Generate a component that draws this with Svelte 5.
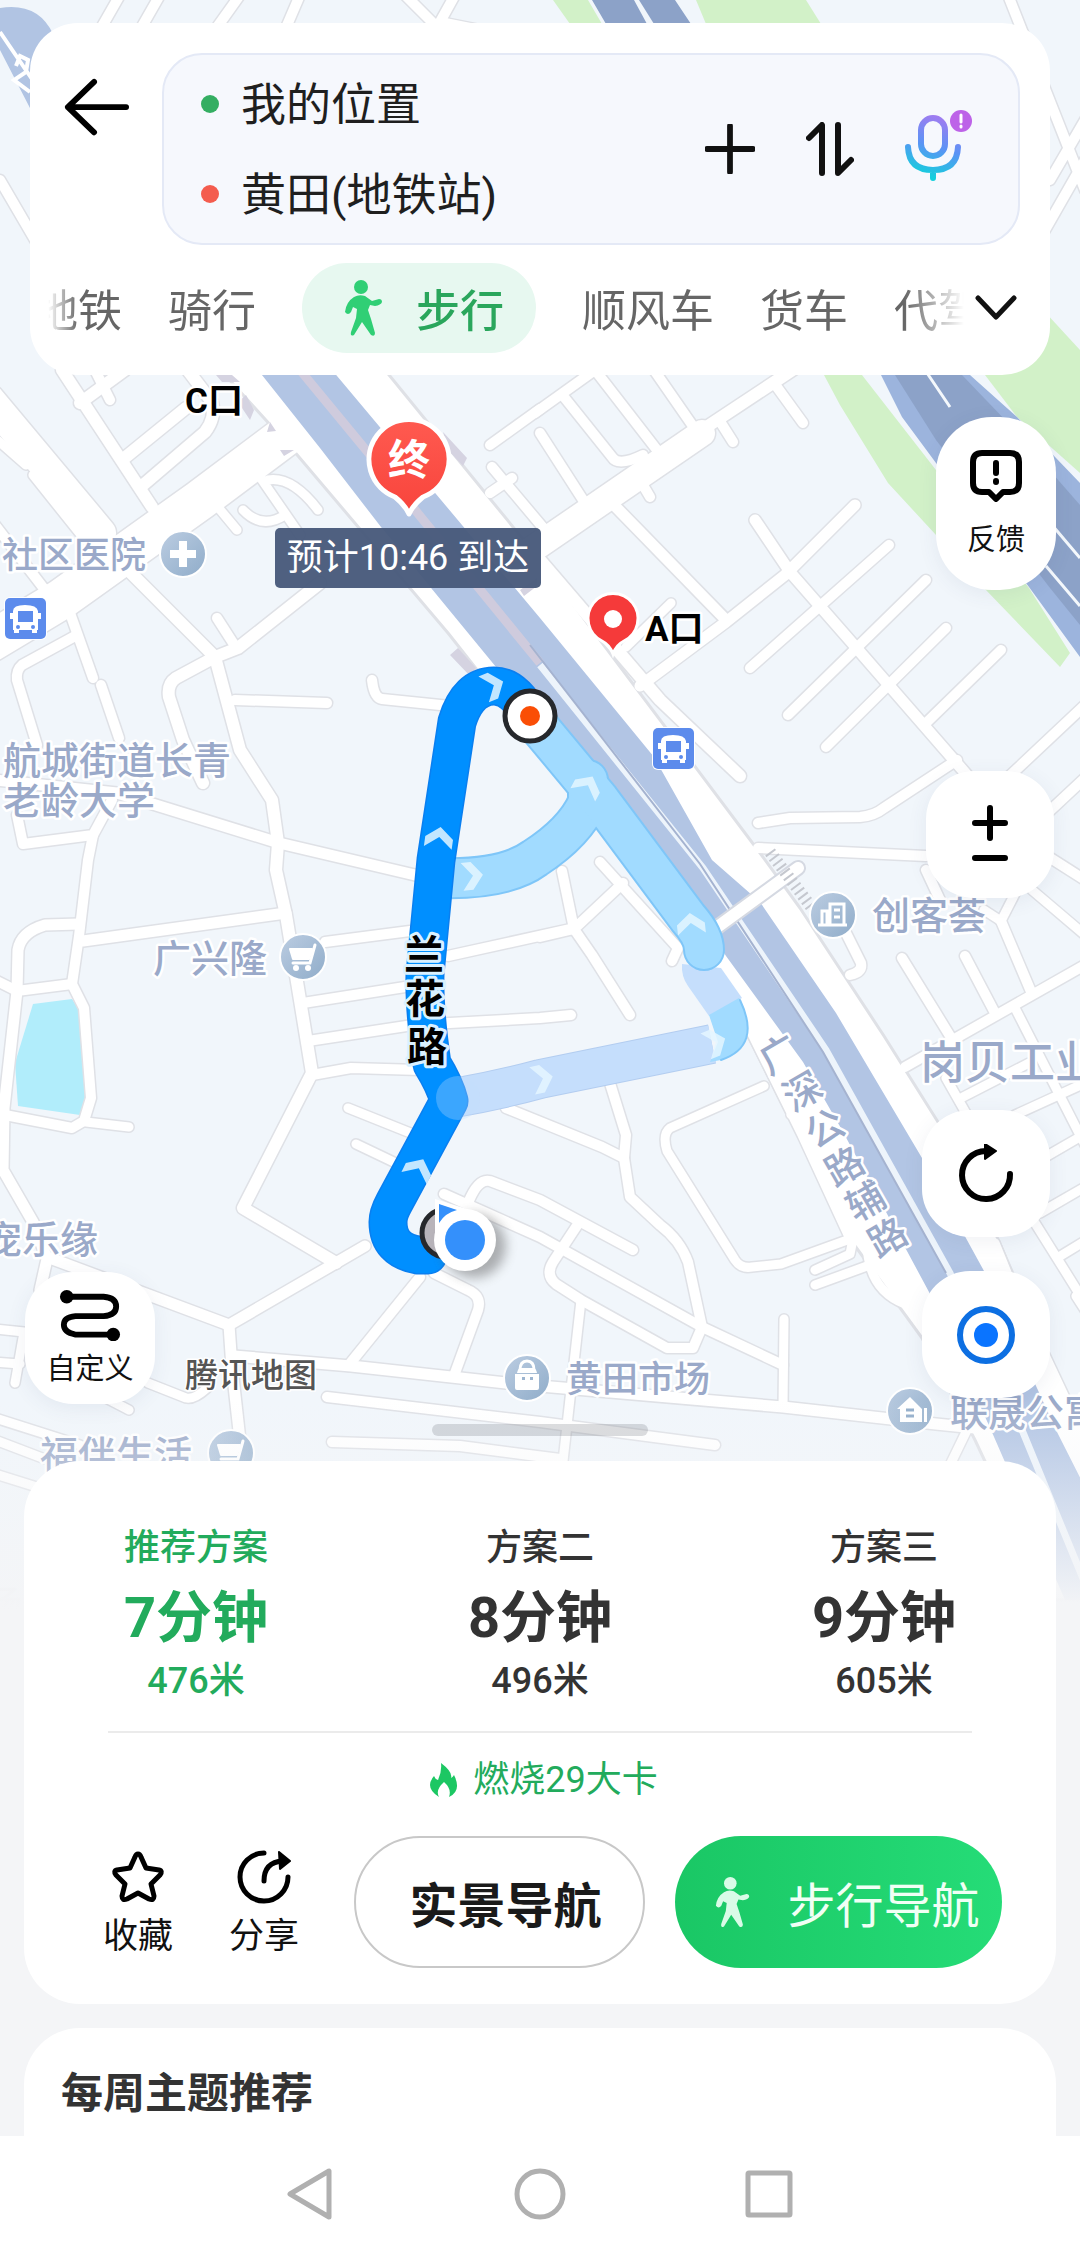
<script lang="ts">
  // street centre lines, [width, path]
  const streets: [number, string][] = [
    [30, 'M-10 400 L0 412 101 533'],
    [40, 'M300 425 L200 500 60 600 -10 642'],
    [12, 'M62 370 L152 507'],
    [12, 'M80 403 L125 370'],
    [12, 'M122 460 L186 408'],
    [12, 'M143 485 L205 432 Q216 418 212 402 L180 360'],
    [9, 'M-5 438 L26 465 M33 475 L85 540'],
    [10, 'M-5 525 L45 590'],
    [12, 'M131 573 L215 657 240 750 272 800 278 843 276 870 286 915 312 1073 243 1208 336 1263'],
    [12, 'M320 583 L238 648 215 657 176 678 Q167 684 169 697 L183 740 203 783'],
    [10, 'M217 618 L235 646'],
    [10, 'M235 700 L327 703'],
    [10, 'M372 680 Q374 698 382 699 L450 706'],
    [10, 'M70 613 L93 678 M101 685 L119 738'],
    [10, 'M77 635 L22 665 Q16 670 17 680 L37 745'],
    [11, 'M-5 780 L117 793 279 843 415 875'],
    [10, 'M17 815 L23 844 93 835 112 800'],
    [10, 'M93 835 L88 860 79 936 72 984 84 1008 91 1098 84 1121 72 1128 5 1115'],
    [11, 'M79 924 L45 925 Q21 932 18 950 L17 991 4 1108 3 1170 33 1222 47 1259 40 1290'],
    [10, 'M-5 980 L17 991 72 984'],
    [9, 'M86 1122 L129 1127'],
    [11, 'M83 941 L286 913'],
    [10, 'M325 942 L410 931 M448 956 L575 928'],
    [10, 'M303 1003 L405 987'],
    [10, 'M308 1041 L413 1025 540 1018 571 1015'],
    [10, 'M312 1075 L351 1068 420 1070'],
    [9, 'M348 1108 L413 1134 M356 1144 L400 1165'],
    [11, 'M47 1257 L229 1325 365 1246'],
    [11, 'M229 1325 L232 1368 240 1440'],
    [11, 'M234 1356 L351 1366 506 1383 783 1407 936 1424 975 1428'],
    [10, 'M348 1366 L420 1277'],
    [10, 'M455 1373 L478 1310 Q482 1296 468 1290 L434 1273'],
    [10, 'M327 1397 L540 1422 715 1445'],
    [10, 'M332 1442 L460 1446 560 1459'],
    [9, 'M148 1383 L186 1398 Q194 1400 207 1388'],
    [9, 'M-5 1418 L80 1445 M-5 1440 L45 1459 M-5 1474 L40 1488'],
    [9, 'M-5 1329 L24 1332 15 1383 M-5 1362 L20 1364 M100 1395 L129 1410'],
    [10, 'M444 1194 L540 1237 702 1327 783 1365'],
    [10, 'M468 1203 Q478 1178 490 1181 L540 1200 633 1250'],
    [10, 'M578 1224 L553 1262 Q545 1275 556 1284 L581 1300 667 1348 693 1348 702 1327 688 1262 Q680 1240 660 1225 L630 1197 624 1158 626 1135 609 1080'],
    [10, 'M506 1108 L602 1147 624 1158'],
    [9, 'M581 1300 L562 1470'],
    [9, 'M784 1319 L783 1407'],
    [9, 'M764 1086 L670 1128 Q662 1134 667 1151 L735 1260 Q741 1269 752 1267 L781 1264 850 1239 867 1239'],
    [9, 'M750 1030 L802 1135 850 1239'],
    [7, 'M790 1115 L806 1106 M812 1150 L826 1142 M832 1182 L846 1174'],
    [9, 'M815 1270 L850 1254 853 1239 M815 1285 L867 1266'],
    [9, 'M867 1243 Q868 1290 905 1304'],
    [10, 'M623 883 L574 929 540 937 M562 871 L574 929 592 955 630 1015'],
    [10, 'M600 862 L678 948 672 961'],
    [10, 'M846 933 L861 963 Q863 972 850 975'],
    [10, 'M902 958 L950 1036 M965 956 L995 1013 M1085 965 L905 1067 M1001 921 L1032 994'],
    [9, 'M1022 880 L1001 921 984 910 M1032 890 L1085 935'],
    [9, 'M1015 1008 L1085 1145 M963 1097 L1029 1063 M946 1078 L967 1115 M1015 1115 L1085 1083'],
    [9, 'M1040 1160 L1085 1134 M1040 1213 L1085 1187 M1030 1215 L1085 1303 M1057 1258 L1085 1241'],
    [9, 'M995 1243 L1010 1280 M1045 1355 L1085 1440 M1076 1296 L1085 1310 M967 1430 L950 1465'],
    [26, 'M530 551 L702 433'],
    [12, 'M702 430 L800 365'],
    [10, 'M535 413 L595 370 M540 433 L585 503 M564 397 L612 457 Q618 467 643 455'],
    [10, 'M595 370 L657 450 M654 370 L697 432 M774 383 L803 423 M721 423 L733 442 M640 480 L650 497'],
    [11, 'M612 503 L726 620'],
    [11, 'M855 505 L785 575 726 622 640 686'],
    [11, 'M755 520 L790 572 860 652 967 775'],
    [10, 'M889 545 L750 668 M926 580 L788 715 M946 628 L826 747 M1001 650 L926 723'],
    [10, 'M957 760 L884 808 Q874 816 860 817 L790 818 758 823'],
    [10, 'M758 848 L926 856 M926 870 L940 900'],
    [10, 'M1085 705 L1000 785 M1085 778 L1040 820 M1030 845 L1085 880'],
    [9, 'M671 603 L626 647'],
    [12, 'M540 560 L660 700 740 776'],
    [10, 'M490 445 L540 409 M492 467 L545 530 M490 493 L512 478'],
    [9, 'M253 467 L300 535 M268 480 Q292 476 318 510 M243 510 Q262 530 285 515 M212 500 L237 530'],
    [10, 'M120 -5 L100 30 M160 -5 L140 30 M300 -5 L285 30 M405 -5 L440 30 M455 -5 L440 22 480 30 M240 -5 L215 30'],
    [10, 'M1008 -5 L1085 190 M1085 120 L1050 180 M1045 230 L1085 160 M0 180 L35 240 M95 370 L110 400'],
  ];

  const chevrons = [
    { x: 492, y: 686, r: 68 },
    { x: 439, y: 839, r: 8 },
    { x: 471, y: 876, r: 84 },
    { x: 418, y: 1170, r: 26 },
    { x: 587, y: 787, r: 28 },
    { x: 691, y: 925, r: -6 },
    { x: 714, y: 1043, r: 68 },
    { x: 541, y: 1079, r: 78 },
  ];

  const places = [
    { name: '社区医院', x: 2, y: 556, size: 36 },
    { name: '航城街道长青', x: 3, y: 761, size: 38 },
    { name: '老龄大学', x: 3, y: 801, size: 38 },
    { name: '广兴隆', x: 153, y: 959, size: 38 },
    { name: '宠乐缘', x: -16, y: 1240, size: 38 },
    { name: '福伴生活', x: 40, y: 1455, size: 38 },
    { name: '黄田市场', x: 566, y: 1380, size: 36 },
    { name: '创客荟', x: 872, y: 916, size: 38 },
    { name: '联晟公寓', x: 950, y: 1413, size: 38 },
  ];

  const discs = [
    [183, 554], [303, 957], [231, 1453], [527, 1378], [833, 915], [910, 1411],
  ];

  const roadName = [
    ['广', 779, 1055], ['深', 803, 1092], ['公', 825, 1129],
    ['路', 845, 1167], ['辅', 866, 1202], ['路', 888, 1238],
  ];

  const plans = [
    { title: '推荐方案', time: '7分钟', distance: '476米' },
    { title: '方案二', time: '8分钟', distance: '496米' },
    { title: '方案三', time: '9分钟', distance: '605米' },
  ];

  let active = $state(0);
  let origin = $state('我的位置');
  let destination = $state('黄田(地铁站)');
</script>

{#snippet walker(cls: string)}
  <svg class={cls} viewBox="0 0 40 58" aria-hidden="true">
    <circle cx="17" cy="8" r="7" />
    <path d="M10 18 Q15 15 21 17 L28 22 L35 20 Q38 20 38 23 Q37 26 31 27 L26 26 L24 31 L27 40 L31 54 Q31 58 27 56 L18 43 L10 56 Q6 58 7 53 L12 39 L13 30 L9 28 L7 33 Q4 37 1 33 Q2 23 10 18 Z" />
  </svg>
{/snippet}

{#snippet bus(x: number, y: number)}
  <g transform="translate({x} {y})">
    <rect x="-1" y="-1" width="43" height="43" rx="6" fill="#fff" />
    <rect width="41" height="41" rx="5" fill="#5c8bec" />
    <path d="M8 13 Q8 7 20 7 T33 13 V32 H8 Z" fill="#fff" />
    <path d="M13 13 H28 V24 H13 Z" fill="#5c8bec" />
    <path d="M5 15 h3 v6 h-3 z M33 15 h3 v6 h-3 z M9 30 h5 v5 h-5 z M27 30 h5 v5 h-5 z" fill="#fff" />
    <circle cx="13" cy="29" r="2" fill="#5c8bec" />
    <circle cx="28" cy="29" r="2" fill="#5c8bec" />
  </g>
{/snippet}

{#snippet cart(x: number, y: number)}
  <g transform="translate({x} {y})" fill="none" stroke="#fff">
    <path d="M-13 -8 H9 L6 2 H-10 Z" fill="#fff" stroke-width="2" stroke-linejoin="round" />
    <path d="M12 -12 L7 6 H-10" stroke-width="3" stroke-linecap="round" />
    <circle cx="-7" cy="11" r="3" fill="#fff" stroke="none" />
    <circle cx="5" cy="11" r="3" fill="#fff" stroke="none" />
  </g>
{/snippet}

<main>
  <svg class="map" viewBox="0 0 1080 1640" role="img" aria-label="步行路线地图">
    <defs>
      <linearGradient id="fade" x1="0" y1="0" x2="0" y2="1">
        <stop offset="0" stop-color="#f4f5f7" stop-opacity="0" />
        <stop offset="1" stop-color="#f4f5f7" />
      </linearGradient>
      <linearGradient id="disc" x1="0" y1="0" x2="1" y2="1">
        <stop offset="0" stop-color="#bccde2" />
        <stop offset="1" stop-color="#8facc9" />
      </linearGradient>
      <linearGradient id="pin" x1="0" y1="0" x2="0" y2="1">
        <stop offset="0" stop-color="#ff5a50" />
        <stop offset="1" stop-color="#f8443c" />
      </linearGradient>
      <filter id="soft" x="-50%" y="-50%" width="200%" height="200%">
        <feGaussianBlur stdDeviation="6" />
      </filter>
    </defs>
    <rect width="1080" height="1640" fill="#f1f6fb" />

    <!-- parks and water -->
    <g fill="#d2f1c8">
      <path d="M824 375 L862 375 936 470 1029 588 1070 653 1060 667 984 588 936 535 888 483 840 405 Z" />
      <path d="M985 375 L1045 312 1080 350 1080 473 1017 417 Z" />
      <path d="M553 0 H588 L602 24 H570 Z M696 0 H806 L821 24 H706 Z" />
    </g>
    <path d="M33 1004 L72 999 80 1011 88 1091 80 1115 18 1106 15 1063 Z" fill="#b1edfb" />

    <!-- expressway in the north-east -->
    <path d="M881 375 H970 L1017 417 1056 458 1080 483 V657 L1029 587 936 463 902 417 Z" fill="#9cb4dd" />
    <path d="M895 375 H962 L1010 425 1080 505 V625 L1050 588 936 440 Z" fill="#8ca2c8" />
    <path d="M925 370 L950 407 M1052 525 L1080 558 M1046 566 L1080 606" stroke="#f4f8fc" stroke-width="3" fill="none" />
    <path d="M592 0 H634 L647 24 H606 Z M639 0 H675 L691 24 H654 Z" fill="#8ca2c8" />
    <path d="M0 8 Q38 2 53 34 L31 80 V110 L0 50 Z" fill="#b1c4e3" />
    <path d="M0 32 L34 82 M16 66 L20 56 28 60 26 72 14 80 30 92" stroke="#fff" stroke-width="4" fill="none" />

    <g class="lines">
      {#each streets as [w, d]}
        <path {d} stroke="#dfe1e6" stroke-width={w + 3} />
      {/each}
      <path d="M205 360 L225 375 293 450 448 633 560 775 700 965 750 1040 850 1239 922 1338 975 1440 1050 1600 H1160 L1080 1430 1005 1255 965 1165 884 1036 800 908 760 853 600 640 540 560 385 370 Z" fill="#fff" stroke="#dfe1e6" stroke-width="3" />
      {#each streets as [w, d]}
        <path {d} stroke="#fff" stroke-width={w} />
      {/each}
    </g>

    <!-- small islands and overpass stubs -->
    <path d="M246 395 L254 410 250 420 238 402 Z M216 375 H232 L240 382 H222 Z M267 432 L270 422 276 431 Z M280 450 H294 L284 456 Z M443 432 L467 458 463 466 448 450 Z M450 655 L458 648 476 668 470 676 Z M520 590 L537 578 V586 L524 596 Z" fill="#d5d3e1" />

    <!-- railway corridor -->
    <path d="M258 370 L320 448 381 527 496 667 667 860 726 956 803 1062 842 1130 929 1292 991 1430 1065 1600 H1142 L1056 1430 984 1271 922 1158 836 1013 760 902 712 860 654 757 540 618 332 370 Z" fill="#b2c5e4" />
    <path d="M300 370 L380 467 540 663" fill="none" stroke="#cfcbdd" stroke-width="9" />
    <path d="M540 665 L703 868 826 1050 950 1273 1022 1430 1100 1620" fill="none" stroke="#edf4fb" stroke-width="7" />
    <path d="M530 645 L700 864 823 1052 946 1273" fill="none" stroke="#a5b3d0" stroke-width="2" />
    <g class="lines">
      <path d="M798 868 L716 928" stroke="#d5d9e2" stroke-width="16" />
      <path d="M798 868 L716 928" stroke="#fff" stroke-width="12" />
      <path d="M770 852 L812 908" stroke="#c5c8cf" stroke-width="12" stroke-dasharray="2 4" style:stroke-linecap="butt" />
    </g>

    <!-- walking routes -->
    <g class="lines">
      <path d="M454 1098 Q500 1090 540 1079 L712 1044" stroke="#b3cdf0" stroke-width="40" style:stroke-linecap="butt" />
      <path d="M454 1098 Q500 1090 540 1079 L712 1044" stroke="#c5defc" stroke-width="38" style:stroke-linecap="butt" />
      <path d="M682 964 L721 968 742 998 709 1016 688 986 Q681 976 682 964 Z" fill="#c5defc" />
      <path d="M709 1015 L739 998 Q762 1046 721 1060 L710 1062 718 1042 Z" fill="#a1dbff" />
      <path d="M740 1000 Q762 1046 721 1060" stroke="#7fc6f8" stroke-width="2" />
      <path d="M440 878 Q505 880 535 858 Q575 832 588 802 V780" stroke="#7fc6f8" stroke-width="42" />
      <path d="M530 716 L600 800 688 918 Q704 936 704 950" stroke="#7fc6f8" stroke-width="42" />
      <path d="M440 878 Q505 880 535 858 Q575 832 588 802 V780" stroke="#a1dbff" stroke-width="38" />
      <path d="M530 716 L600 800 688 918 Q704 936 704 950" stroke="#a1dbff" stroke-width="38" />
      <path d="M428 1255 H418 Q388 1250 388 1222 Q388 1214 394 1203 L449 1101 Q445 1085 432 1064 Q424 1010 425 974 L436 860 457 722 Q468 686 494 686 Q514 686 530 716" stroke="#0a7ff0" stroke-width="39" />
      <path d="M428 1255 H418 Q388 1250 388 1222 Q388 1214 394 1203 L449 1101 Q445 1085 432 1064 Q424 1010 425 974 L436 860 457 722 Q468 686 494 686 Q514 686 530 716" stroke="#008fff" stroke-width="36" />
    </g>
    <circle cx="458" cy="1098" r="22" fill="#c5defc" fill-opacity="0.3" />
    {#each chevrons as c}
      <path transform="translate({c.x} {c.y}) rotate({c.r})" d="M-14 9 V-1 L0 -12 14 -1 V9 L0 -2 Z" fill="#e4f6ff" fill-opacity="0.85" />
    {/each}

    <!-- place labels -->
    <g class="place">
      {#each places as p}
        <text x={p.x} y={p.y} font-size={p.size}>{p.name}</text>
      {/each}
      <text class="district" x="920" y="1063">岗贝工业</text>
      {#each roadName as [ch, x, y]}
        <text class="road" transform="translate({x} {y}) rotate(-30)">{ch}</text>
      {/each}
      <text class="ghost" x="-14" y="1605">场</text>
    </g>
    {#each discs as [x, y]}
      <circle cx={x} cy={y} r="23" fill="url(#disc)" stroke="#fff" stroke-width="2" />
    {/each}
    <path d="M179 541 h8 v9 h9 v8 h-9 v9 h-8 v-9 h-9 v-8 h9 z" fill="#fff" />
    {@render cart(303, 957)}
    {@render cart(231, 1453)}
    <path d="M515 1374 H539 V1388 Q539 1390 537 1390 H517 Q515 1390 515 1388 Z M517 1373 q1 -5 4 -5 h12 q3 0 4 5 z" fill="#fff" />
    <path d="M520 1370 q0 -9 7 -9 t7 9" fill="none" stroke="#fff" stroke-width="3" />
    <path d="M522 1377 h3 v3 h-3 z M530 1377 h3 v3 h-3 z" fill="#9db5d0" />
    <path d="M818 925 h29 M822 925 v-14 h5 v14 M830 925 v-21 h14 v21" fill="none" stroke="#fff" stroke-width="3" />
    <path d="M834 910 h6 M834 917 h6" stroke="#fff" stroke-width="3" />
    <path d="M897 1409 L910 1397 922 1409 V1422 H900 V1409 Z M924 1408 h3 v14 h-3 z" fill="#fff" />
    <path d="M906 1410 h8 M906 1416 h8" stroke="#92adca" stroke-width="3" />
    {@render bus(5, 598)}
    {@render bus(653, 728)}

    <g class="street-name">
      <text x="424" y="955">兰</text>
      <text x="425" y="999">花</text>
      <text x="427" y="1047">路</text>
    </g>
    <g class="exit">
      <text x="185" y="401">C口</text>
      <text x="645" y="629">A口</text>
    </g>
    <path d="M613 654 Q610 645 602 641 A25 25 0 1 1 624 641 Q616 645 613 654 Z" fill="#f53a3a" stroke="#fff" stroke-width="3" />
    <circle cx="613" cy="619" r="9" fill="#fff" />

    <!-- destination -->
    <path d="M409 514 Q405 505 395 497 A40 40 0 1 1 423 497 Q413 505 409 514 Z" fill="url(#pin)" stroke="#fff" stroke-width="5" stroke-linejoin="round" />
    <text class="end" x="409" y="460">终</text>
    <rect x="275" y="528" width="266" height="60" rx="5" fill="#48597b" fill-opacity="0.96" />
    <text class="eta" x="408" y="558">预计10:46 到达</text>
    <circle cx="530" cy="716" r="25" fill="#fff" stroke="#26282c" stroke-width="5" />
    <circle cx="530" cy="716" r="10" fill="#fa4e06" />

    <!-- current position -->
    <circle cx="446" cy="1233" r="24" fill="#b8b4ba" stroke="#26282c" stroke-width="5" />
    <circle cx="474" cy="1246" r="32" fill="#555" opacity="0.45" filter="url(#soft)" />
    <path d="M435 1236 V1199 L470 1210 Z" fill="#fff" />
    <circle cx="465" cy="1240" r="31" fill="#fff" />
    <path d="M439 1204 L457 1210 Q445 1213 439 1223 Z" fill="#3490fb" />
    <circle cx="465" cy="1240" r="20" fill="#3490fb" />

    <text class="provider" x="185" y="1375">腾讯地图</text>
    <rect y="1400" width="1080" height="210" fill="url(#fade)" />
    <rect y="1609" width="1080" height="31" fill="#f4f5f7" />
  </svg>

  <header>
    <div class="search">
      <button class="back" aria-label="返回">
        <svg viewBox="0 0 68 60"><path d="M64 30 H4 M31 4 L4 30 L31 56" /></svg>
      </button>
      <div class="route-box">
        <div class="fields">
          <label><i class="dot from"></i><input aria-label="起点" bind:value={origin} /></label>
          <label><i class="dot to"></i><input aria-label="终点" bind:value={destination} /></label>
        </div>
        <button aria-label="添加途经点">
          <svg class="plus" viewBox="0 0 52 52"><path d="M26 2 V50 M2 26 H50" /></svg>
        </button>
        <button aria-label="交换起终点">
          <svg class="swap" viewBox="0 0 48 54"><path d="M3 16 L16 3 V51 M32 3 V51 L45 38" /></svg>
        </button>
        <button aria-label="语音搜索">
          <svg class="mic" viewBox="0 0 68 74">
            <defs>
              <linearGradient id="mic" gradientUnits="userSpaceOnUse" x1="40" y1="8" x2="22" y2="68">
                <stop offset="0" stop-color="#a37bf0" />
                <stop offset="0.5" stop-color="#5b93f5" />
                <stop offset="1" stop-color="#12d0dc" />
              </linearGradient>
            </defs>
            <g fill="none" stroke="url(#mic)" stroke-width="6" stroke-linecap="round">
              <rect x="16" y="9" width="24" height="38" rx="12" />
              <path d="M3 38 Q4 61 28 61 T53 38 M28 62 V69" />
            </g>
            <circle cx="56" cy="12" r="11" fill="#bd63e8" />
            <path d="M56 6 V13 M56 17 V18" stroke="#fff" stroke-width="3" stroke-linecap="round" />
          </svg>
        </button>
      </div>
    </div>
    <div class="modes">
      <nav>
        <button>地铁</button>
        <button>骑行</button>
        <button class="current">{@render walker('walk-icon')}步行</button>
        <button>顺风车</button>
        <button>货车</button>
        <button>代驾</button>
      </nav>
      <button class="more" aria-label="更多出行方式">
        <svg viewBox="0 0 42 26"><path d="M3 3 L21 22 L39 3" /></svg>
      </button>
    </div>
  </header>

  <section class="controls">
    <button class="tool custom">
      <svg viewBox="0 0 64 54">
        <path d="M8 8 H46 Q59 9 59 18 T46 28 H17 Q5 29 5 37 T17 47 H55" />
        <circle cx="8" cy="8" r="7" /><circle cx="56" cy="47" r="7" />
      </svg>
      自定义
    </button>
    <div class="stack">
      <button class="tool feedback">
        <svg viewBox="0 0 52 52">
          <path d="M12 3 H40 Q49 3 49 12 V33 Q49 42 40 42 H33 L26 49 L19 42 H12 Q3 42 3 33 V12 Q3 3 12 3 Z" />
          <path d="M26 13 V23 M26 31 V32" />
        </svg>
        反馈
      </button>
      <button class="tool zoom" aria-label="缩放">
        <svg viewBox="0 0 36 60"><path d="M18 3 V33 M3 18 H33 M3 53 H33" /></svg>
      </button>
      <button class="tool refresh" aria-label="刷新路线">
        <svg viewBox="0 0 56 60">
          <path d="M52 30 A24 24 0 1 1 28 7" />
          <path class="tip" d="M27 0 L38 7 L27 15 Z" />
        </svg>
      </button>
      <button class="tool locate" aria-label="定位">
        <svg viewBox="0 0 60 60"><circle cx="30" cy="30" r="26" /><circle class="core" cx="30" cy="30" r="12" /></svg>
      </button>
    </div>
  </section>
  <div class="handle"></div>

  <section class="sheet">
    <div class="plans">
      {#each plans as plan, i}
        <button class:chosen={active === i} onclick={() => (active = i)}>
          <span class="title">{plan.title}</span>
          <strong>{plan.time}</strong>
          <span class="distance">{plan.distance}</span>
        </button>
      {/each}
    </div>
    <p class="burn">
      <svg viewBox="0 0 28 34"><path d="M11 0 Q23 9 21 15 Q23 14 24 12 Q32 28 19 34 Q22 26 14 19 Q5 27 9 34 Q-6 25 4 13 Q5 16 8 17 Q12 9 11 0 Z" /></svg>
      燃烧29大卡
    </p>
    <div class="actions">
      <button class="small">
        <svg viewBox="0 0 54 54"><path d="M27 4 Q29 4 30 7 L35 18 L48 20 Q52 21 49 25 L40 34 L43 46 Q43 51 38 49 L27 43 L16 49 Q11 51 11 46 L14 34 L5 25 Q2 21 6 20 L19 18 L24 7 Q25 4 27 4 Z" /></svg>
        收藏
      </button>
      <button class="small">
        <svg viewBox="0 0 54 54">
          <path d="M27 3 A24 24 0 1 0 51 27 M27 31 Q27 12 46 11" />
          <path class="tip" d="M42 2 L53 11 L43 19 Z" />
        </svg>
        分享
      </button>
      <button class="live">实景导航</button>
      <button class="go">{@render walker('go-icon')}步行导航</button>
    </div>
  </section>

  <section class="weekly">
    <h2>每周主题推荐</h2>
  </section>

  <footer>
    <button aria-label="返回键"><svg viewBox="0 0 52 52"><path d="M44 3 V49 L5 26 Z" /></svg></button>
    <button aria-label="主页键"><svg viewBox="0 0 52 52"><circle cx="26" cy="26" r="23" /></svg></button>
    <button aria-label="最近任务键"><svg viewBox="0 0 52 52"><rect x="5" y="5" width="42" height="42" rx="1" /></svg></button>
  </footer>
</main>

<style>
  :global(body) {
    margin: 0;
    background: #fff;
  }

  main {
    position: relative;
    overflow: hidden;
    background: #f4f5f7;
    color: #333;
    font-family: Roboto, 'Noto Sans CJK SC', sans-serif;
  }

  button {
    display: flex;
    align-items: center;
    justify-content: center;
    padding: 0;
    border: 0;
    background: none;
    color: inherit;
    font: inherit;
    cursor: pointer;
  }

  svg {
    display: block;
    flex: none;
  }

  .map {
    position: absolute;
    top: 0;
    left: 0;
    width: 100%;
  }

  .lines {
    fill: none;
    stroke-linecap: round;
    stroke-linejoin: round;
  }

  .map text {
    dominant-baseline: central;
    paint-order: stroke;
    stroke-linejoin: round;
  }

  .place text {
    fill: #9aa9c9;
    stroke: #fff;
    stroke-width: 5px;
    font-weight: 500;
  }

  .place .district {
    font-size: 45px;
  }

  .place .road {
    font-size: 38px;
    text-anchor: middle;
  }

  .place .ghost {
    fill: #e2e5ea;
    stroke: none;
    font-size: 36px;
  }

  .street-name text {
    fill: #000;
    stroke: #d9f1ff;
    stroke-width: 6px;
    font-size: 40px;
    font-weight: 700;
    text-anchor: middle;
  }

  .exit text {
    fill: #000;
    stroke: #fff;
    stroke-width: 5px;
    font-size: 35px;
    font-weight: 700;
  }

  .end {
    fill: #fff;
    font-size: 42px;
    font-weight: 700;
    text-anchor: middle;
  }

  .eta {
    fill: #fff;
    font-size: 36px;
    text-anchor: middle;
  }

  .provider {
    fill: #555;
    stroke: #fff;
    stroke-width: 3px;
    font-size: 33px;
    font-weight: 500;
  }

  header {
    position: relative;
    margin: 23px 30px 0;
    padding: 30px 30px 22px 18px;
    border-radius: 48px;
    background: #fff;
  }

  .search {
    display: flex;
    align-items: flex-start;
  }

  .back {
    width: 114px;
    height: 108px;
    padding-right: 16px;
  }

  .back svg {
    width: 66px;
    fill: none;
    stroke: #000;
    stroke-width: 6px;
    stroke-linecap: round;
    stroke-linejoin: round;
  }

  .route-box {
    display: flex;
    flex: 1;
    align-items: center;
    gap: 51px;
    padding: 4px 45px 4px 37px;
    border: 2px solid #e4e9f6;
    border-radius: 40px;
    background: #f6f8fd;
  }

  .fields {
    flex: 1;
  }

  label {
    display: flex;
    align-items: center;
    gap: 22px;
    height: 90px;
  }

  .dot {
    width: 18px;
    height: 18px;
    border-radius: 50%;
  }

  .from {
    background: #34ae62;
  }

  .to {
    background: #f45c4e;
  }

  input {
    flex: 1;
    width: 100px;
    padding: 4px 0 0;
    border: 0;
    outline: 0;
    background: none;
    color: #1f1f1f;
    font: inherit;
    font-size: 45px;
    line-height: 64px;
  }

  .plus {
    width: 50px;
  }

  .swap {
    width: 48px;
  }

  .plus,
  .swap {
    fill: none;
    stroke: #111;
    stroke-width: 6px;
    stroke-linecap: round;
    stroke-linejoin: round;
  }

  .mic {
    width: 68px;
    margin-bottom: 6px;
  }

  .modes {
    display: flex;
    align-items: center;
    margin-top: 18px;
  }

  nav {
    display: flex;
    flex: 1;
    gap: 46px;
    overflow: hidden;
    mask-image: linear-gradient(90deg, transparent, #000 30px, #000 calc(100% - 60px), transparent);
  }

  nav button {
    flex: none;
    height: 90px;
    color: #666;
    font-size: 44px;
  }

  nav button:first-child {
    margin-left: -14px;
  }

  nav .current {
    gap: 32px;
    padding: 0 32px 0 42px;
    border-radius: 45px;
    background: #e7f8f0;
    color: #2aa65c;
    font-weight: 500;
  }

  .walk-icon {
    width: 40px;
    fill: #30cf75;
  }

  .more {
    width: 64px;
    height: 80px;
    margin-right: -8px;
  }

  .more svg {
    width: 42px;
    fill: none;
    stroke: #111;
    stroke-width: 5px;
    stroke-linecap: round;
    stroke-linejoin: round;
  }

  .controls {
    position: relative;
    display: flex;
    align-items: flex-end;
    justify-content: space-between;
    padding: 42px 24px 0 25px;
  }

  .stack {
    display: flex;
    flex-direction: column;
    align-items: flex-end;
    padding-bottom: 6px;
  }

  .tool {
    width: 128px;
    height: 127px;
    border-radius: 48px;
    background: #fff;
    box-shadow: 0 4px 20px rgba(60, 80, 120, 0.08);
    color: #111;
    font-size: 29px;
    line-height: 36px;
  }

  .tool svg {
    fill: none;
    stroke: #000;
    stroke-width: 6px;
    stroke-linecap: round;
    stroke-linejoin: round;
  }

  .custom,
  .feedback {
    flex-direction: column;
  }

  .custom {
    width: 130px;
    height: 132px;
    gap: 10px;
  }

  .custom svg {
    width: 62px;
  }

  .custom circle {
    fill: #000;
    stroke: none;
  }

  .feedback {
    width: 120px;
    height: 173px;
    gap: 20px;
    margin-bottom: 181px;
    border-radius: 56px;
  }

  .feedback svg {
    width: 52px;
  }

  .zoom {
    margin: 0 2px 212px 0;
  }

  .zoom svg {
    width: 36px;
  }

  .refresh {
    margin: 0 6px 34px 0;
  }

  .refresh svg {
    width: 56px;
  }

  .refresh .tip,
  .small .tip {
    fill: #000;
    stroke-width: 2px;
  }

  .locate {
    margin-right: 6px;
  }

  .locate svg {
    width: 60px;
    stroke: #0d6fe2;
  }

  .locate .core {
    fill: #0a74ff;
    stroke: none;
  }

  .handle {
    position: relative;
    width: 216px;
    height: 12px;
    margin: 20px auto 25px;
    border-radius: 6px;
    background: rgba(120, 124, 130, 0.26);
  }

  .sheet {
    position: relative;
    margin: 0 24px;
    padding: 62px 0 36px;
    border-radius: 56px;
    background: #fff;
  }

  .plans {
    display: grid;
    grid-template-columns: repeat(3, 1fr);
    padding-bottom: 32px;
  }

  .plans button {
    flex-direction: column;
    font-size: 36px;
    font-weight: 500;
  }

  .plans .chosen {
    color: #22ab5c;
  }

  .title {
    line-height: 50px;
  }

  .plans strong {
    font-size: 56px;
    font-weight: 700;
    line-height: 90px;
  }

  .distance {
    line-height: 36px;
  }

  .burn {
    display: flex;
    align-items: center;
    justify-content: center;
    gap: 15px;
    margin: 0 84px;
    padding: 22px 0 0 8px;
    border-top: 2px solid #ebebeb;
    color: #22ab5c;
    font-size: 36px;
    line-height: 50px;
  }

  .burn svg {
    width: 28px;
    fill: #1cc763;
  }

  .actions {
    display: flex;
    height: 132px;
    margin: 31px 54px 0 67px;
  }

  .small {
    flex-direction: column;
    gap: 8px;
    width: 94px;
    margin-right: 32px;
    padding-top: 8px;
    color: #111;
    font-size: 35px;
    line-height: 50px;
  }

  .small svg {
    width: 54px;
    fill: none;
    stroke: #000;
    stroke-width: 5px;
    stroke-linecap: round;
    stroke-linejoin: round;
  }

  .live,
  .go {
    border-radius: 66px;
    font-size: 48px;
  }

  .live {
    flex: 291;
    box-sizing: border-box;
    margin-left: 11px;
    padding-left: 12px;
    border: 2px solid #c8c8c8;
    color: #1a1a1a;
    font-weight: 700;
  }

  .go {
    flex: 327;
    gap: 36px;
    margin-left: 30px;
    padding-left: 18px;
    background: linear-gradient(90deg, #1ac765, #25dc77);
    color: #f0fff5;
  }

  .go-icon {
    width: 36px;
    fill: #d9fbe7;
  }

  .weekly {
    position: relative;
    margin: 24px 24px 0;
    padding: 35px 37px 11px;
    border-radius: 56px 56px 0 0;
    background: #fff;
  }

  h2 {
    margin: 0;
    font-size: 42px;
    font-weight: 700;
    line-height: 62px;
  }

  footer {
    display: flex;
    justify-content: center;
    gap: 177px;
    padding: 32px 0;
    background: #fff;
  }

  footer svg {
    width: 52px;
    fill: none;
    stroke: #b0b0b0;
    stroke-width: 5px;
    stroke-linejoin: round;
  }
</style>
